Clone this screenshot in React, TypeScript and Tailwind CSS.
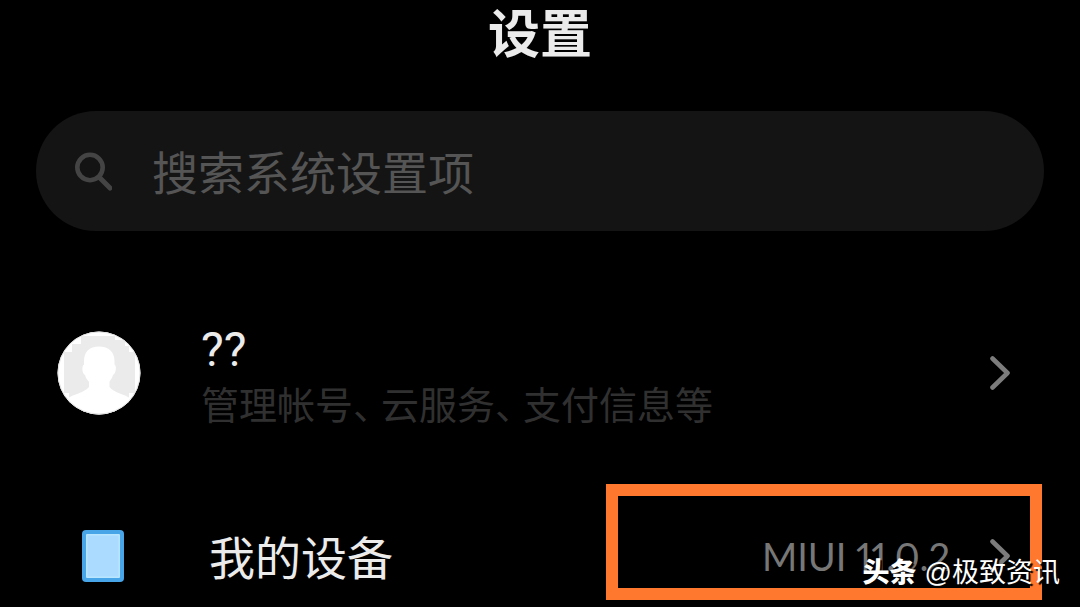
const accountTopics = ['管理帐号', '云服务', '支付信息等'];

function SearchIcon() {
  return (
    <svg viewBox="0 0 40 40" className="w-10 h-10 shrink-0" fill="none" stroke="#444444" aria-hidden="true">
      <circle cx="18" cy="16.500" r="12.7" strokeWidth="4.6" />
      <path d="M27 26L38 37" strokeWidth="5" strokeLinecap="round" />
    </svg>
  );
}

function Avatar() {
  return (
    <svg viewBox="0 0 84 84" className="w-[84px] h-[84px] shrink-0" aria-hidden="true">
      <defs>
        <clipPath id="avatar-clip">
          <circle cx="42" cy="42" r="41.5" />
        </clipPath>
      </defs>
      <g clipPath="url(#avatar-clip)">
        <rect width="84" height="84" fill="#ffffff" />
        <path d="M24 5H58V9H68V15H72V21H78V62H72V67H12V62H7V21H15V13H24Z" fill="#ebebeb" />
        <path d="M42 15.5C52 15.5 57.5 21 57.5 30V33.5C60 34.5 59 43 56 44C55 48 53 49 52.5 51V56C57 62 66 62 76 69V84H8V69C18 62 27 62 32 56V51C31 49 29 48 28 44C25 43 24.5 34.5 27 33.5V30C27 21 32 15.5 42 15.5Z" fill="#ffffff" />
      </g>
      <circle cx="42" cy="42" r="41" fill="none" stroke="#e2e2e2" />
    </svg>
  );
}

function DeviceIcon() {
  return (
    <svg viewBox="0 0 42 52" className="w-[42px] h-[52px]" aria-hidden="true">
      <rect width="42" height="52" rx="4" fill="#47a5e8" />
      <rect x="4" y="4" width="34" height="44" rx="1" fill="#b9e5ff" />
      <rect x="5.5" y="5.5" width="31" height="41" fill="#abdcff" />
    </svg>
  );
}

function Arrow() {
  return (
    <svg viewBox="0 0 20 34" className="w-5 h-[34px] shrink-0" fill="none" stroke="#7c7c7c" strokeWidth="4.6" strokeLinecap="round" strokeLinejoin="round" aria-hidden="true">
      <path d="M2.5 2.5L17.5 17L2.5 31.5" />
    </svg>
  );
}

export default function App() {
  return (
    <main className="relative min-h-screen overflow-hidden bg-black font-[Roboto,'Noto_Sans_CJK_SC',sans-serif] text-[#ebebeb]">
      <h1 className="pt-1 pb-[43px] text-center text-[52px] leading-[64px] font-bold">设置</h1>

      <label className="mx-9 flex h-[120px] items-center gap-10 rounded-full bg-[#141414] px-9">
        <SearchIcon />
        <input
          type="search"
          aria-label="搜索系统设置项"
          placeholder="搜索系统设置项"
          className="h-full min-w-0 flex-1 bg-transparent pt-1.5 text-[46px] outline-none placeholder:text-[#555555]"
        />
      </label>

      <nav className="mt-[86px] flex flex-col gap-[76px] pl-[57px] pr-[70px]">
        <a href="#account" className="flex h-[112px] items-center gap-[60px]">
          <Avatar />
          <span className="min-w-0 flex-1 pt-2.5">
            <span className="block text-[48px] leading-[56px]">??</span>
            <span className="block whitespace-nowrap text-[38px] leading-[56px] text-[#303030]">
              {accountTopics.map((topic, i) => (
                <span key={topic}>
                  {i > 0 && <span className="inline-block w-7 [font-feature-settings:'halt']">、</span>}
                  {topic}
                </span>
              ))}
            </span>
          </span>
          <Arrow />
        </a>

        <a href="#device" className="flex h-[102px] items-center gap-[60px]">
          <span className="flex w-[92px] justify-center">
            <DeviceIcon />
          </span>
          <span className="flex-1 pt-1.5 text-[46px] leading-[56px]">我的设备</span>
          <span className="flex items-center gap-10">
            <span className="font-[Lato,sans-serif] text-[38px] proportional-nums text-[#777777]">MIUI 11.0.2</span>
            <Arrow />
          </span>
        </a>
      </nav>

      <div className="absolute right-[38px] bottom-[7px] h-[116px] w-[436px] border-12 border-[#ff782d]" />
      <p className="absolute right-5 bottom-4 flex items-center gap-2 font-['Liberation_Sans','Noto_Sans_CJK_SC',sans-serif] text-[27px] leading-9 text-white [text-shadow:2px_2px_1px_#000]">
        <span className="font-black">头条</span>
        <span>@极致资讯</span>
      </p>
    </main>
  );
}
